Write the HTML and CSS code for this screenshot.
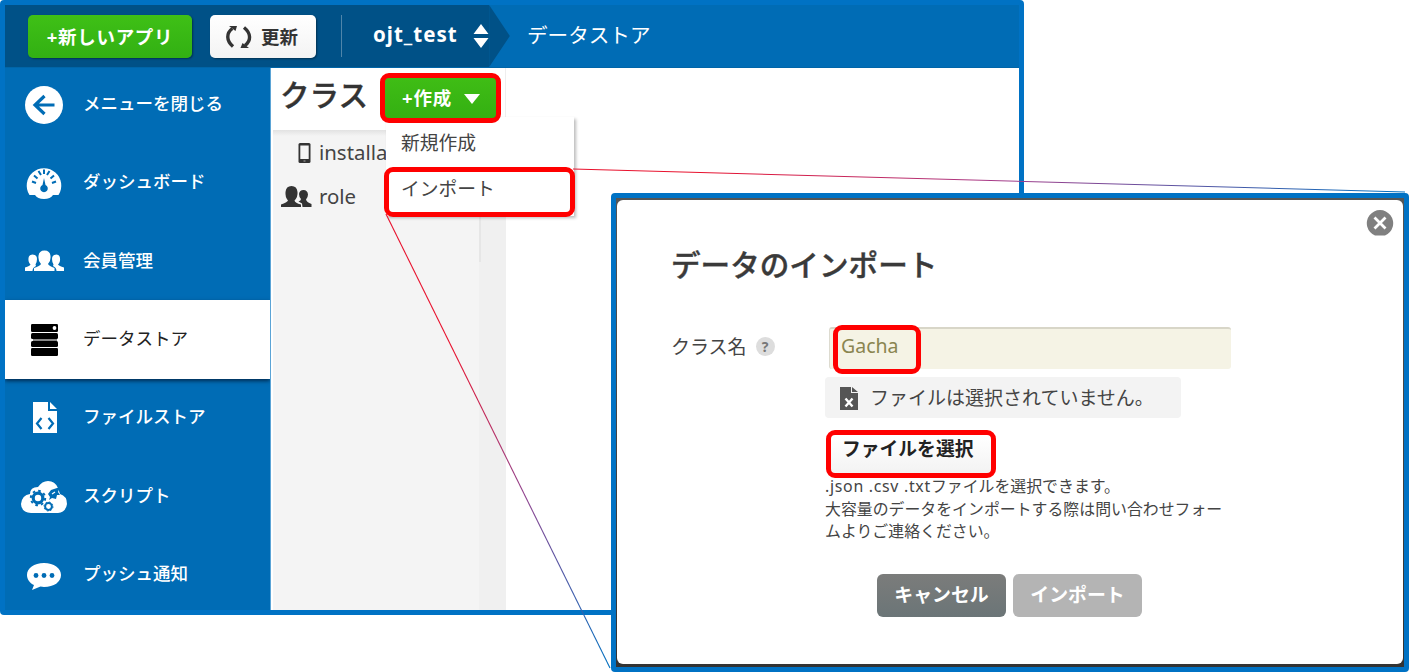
FILE: index.html
```html
<!DOCTYPE html>
<html lang="ja">
<head>
<meta charset="utf-8">
<title>データストア</title>
<link rel="stylesheet" href="styles.css">
</head>
<body>
<div class="stage">
  <div class="window">
    <header class="topbar">
      <div class="topbar-left">
        <button class="btn new-app"><span>+新しいアプリ</span></button>
        <button class="btn refresh">
          <svg width="28" height="24" viewBox="0 0 28 24"><g fill="none" stroke="#333" stroke-width="3.4"><path d="M8 21.500C1 15.500 1.300 8 7.300 3.500"/><path d="M19 2.500C26.500 8.500 26 16 20 20.500"/></g><path d="M4 1H12L10.500 6Z" fill="#333"/><path d="M24 23H15.500L17.500 18Z" fill="#333"/></svg>
          <span>更新</span>
        </button>
        <i class="divider"></i>
        <b class="app-name">ojt_test</b>
        <svg class="sorter" width="16" height="26" viewBox="0 0 16 26"><path d="M8 1 15.500 11H.5ZM8 25 .5 15H15.500Z" fill="#fff"/></svg>
      </div>
      <svg class="chevron" width="22" height="63" viewBox="0 0 22 63"><path d="M0 0 21 31.500 0 63Z" fill="#005187"/></svg>
      <span class="crumb">データストア</span>
    </header>
    <div class="content">
      <nav class="side">
        <div class="item first"><svg class="ico" width="50" height="44" viewBox="0 0 50 44"><circle cx="25" cy="22" r="19" fill="#fff"/><path d="M35.500 22H16M25.500 13 16 22l9.500 9" fill="none" stroke="#006cb5" stroke-width="3.200"/></svg><span>メニューを閉じる</span></div>
        <div class="item"><svg class="ico" width="50" height="44" viewBox="0 0 50 44"><path d="M10.500 34A17.300 17.300 0 1 1 39.500 34H34Q31.500 38 25 38T16 34Z" fill="#fff"/><path d="M13 20.500l4 1.500M15 14.500l3.500 3M19.500 10l2.500 4M25 8.500v4.500M30.500 10 28 14M35 14.500 31.500 17.500M37 20.500 33 22" stroke="#006cb5" stroke-width="2"/><path d="M25 17 26.500 24a3.800 3.800 0 1 1-3 0Z" fill="#006cb5"/></svg><span>ダッシュボード</span></div>
        <div class="item"><svg class="ico" width="50" height="44" viewBox="0 0 50 44" fill="#fff"><path d="M15 32V29Q21 27 22 25 19 22 19.500 17 20 11.500 25.500 11.500T31.500 17Q32 22 29 25 30 27 35.500 29V32Z"/><path d="M6 32V28.500Q11 27 11.500 25.500 9 23 9.500 19 10 15.500 13.500 15.500 18 15.500 18 20 18 23 16.500 25.500L17 27Q13.500 28.500 13.500 32ZM45 32V28.500Q40 27 39 25.500 41.500 23 41 19 40.500 15.500 37.500 15.500 33 15.500 33 20 33 23 34.500 25.500L34 27Q37.500 28.500 37.500 32Z"/></svg><span>会員管理</span></div>
        <div class="item active"><svg class="ico" width="50" height="44" viewBox="0 0 50 44"><g fill="#000"><rect x="12" y="6" width="27" height="8" rx="1.200"/><rect x="12" y="15" width="27" height="6" rx="1.500"/><rect x="12" y="23" width="27" height="6" rx="1.500"/><rect x="12" y="30" width="27" height="8" rx="1.200"/></g><path d="M14 22h24" stroke="#888" stroke-width="2"/><circle cx="35.500" cy="10" r="1.900" fill="#fff"/></svg><span>データストア</span></div>
        <div class="item"><svg class="ico" width="50" height="44" viewBox="0 0 50 44"><path d="M14 6h15v9h9v22H14ZM31 6l7 7H31Z" fill="#fff"/><path d="m22.500 22-4.500 5.500 4.500 5.500M29.500 22l4.500 5.500-4.500 5.500" fill="none" stroke="#006cb5" stroke-width="2.200"/></svg><span>ファイルストア</span></div>
        <div class="item"><svg class="ico" width="50" height="44" viewBox="0 0 50 44"><path d="M12 39Q2 38 2 30 3 21 11 20 11 13 19 13 23 7 29 7 36 7 39 14L41 20Q48 22 48 30 47 38 39 39Z" fill="#fff"/><g fill="none" stroke="#006cb5"><circle cx="19" cy="24" r="4.800" stroke-width="3.200"/><circle cx="19" cy="24" r="7.200" stroke-width="2" stroke-dasharray="2.600 3.050"/><circle cx="29.500" cy="32.500" r="3.400" stroke-width="2"/><circle cx="29.500" cy="32.500" r="4.500" stroke-width="1" stroke-dasharray="1.700 1.800"/></g><path d="M29 20 32 16 35 15 41 13 39 18 41 21 38 21 37 25 33 24 30 26 31 23Z" fill="#006cb5"/><path d="m33 20 3-2" stroke="#fff" stroke-width="1.200"/></svg><span>スクリプト</span></div>
        <div class="item"><svg class="ico" width="50" height="44" viewBox="0 0 50 44"><path d="M25 11C35 11 42 16 42 23S35 35 25 35L21.500 34.500 13 38 15 33C10.500 31 8 27 8 23 8 16 15 11 25 11Z" fill="#fff"/><g fill="#006cb5"><circle cx="17" cy="23.500" r="2.400"/><circle cx="25" cy="23.500" r="2.400"/><circle cx="33" cy="23.500" r="2.400"/></g></svg><span>プッシュ通知</span></div>
      </nav>
      <section class="classes">
        <div class="classes-head"><h2>クラス</h2></div>
        <div class="classes-body">
          <div class="list">
            <div class="row"><svg width="32" height="24" viewBox="0 0 32 24"><rect x="17.500" y="3" width="12" height="20" rx="1.500" fill="#333"/><path d="M19.300 5.500h8.400V19H19.300Z" fill="#f4f4f4"/><path d="M22.500 21h2" stroke="#aaa"/></svg><span>installa</span></div>
            <div class="row"><svg width="32" height="24" viewBox="0 0 32 24" fill="#333"><path d="M0 23V20.500Q6 18.500 7 16.500 4 13 4.500 8 5 2 10.500 2T16.500 8Q17 13 13.500 16.500 14 19 20 20.500V23ZM21.500 23 21 19.500 17.500 17.500Q20 16.500 20 15 18 13 18 10 18.500 6 22.500 6T27 10.500Q27 13 25 15.500 25.500 18 30.500 20V23Z"/></svg><span>role</span></div>
          </div>
          <div class="gutter"><i></i></div>
        </div>
      </section>
      <main class="blank"></main>
    </div>
  </div>

  <div class="menu">
    <div class="menu-item">新規作成</div>
    <div class="menu-item second">インポート</div>
  </div>
  <div class="create"><span>+作成</span><svg width="16" height="10" viewBox="0 0 16 10"><path d="M0 0h16L8 10Z" fill="#fff"/></svg></div>
  <i class="mark mark-import"></i>

  <svg class="leaders" width="1409" height="672" viewBox="0 0 1409 672">
    <defs>
      <linearGradient id="across" gradientUnits="userSpaceOnUse" x1="575" y1="169" x2="1405" y2="192"><stop offset=".15" stop-color="#e8112d"/><stop offset=".5" stop-color="#a83a87"/><stop offset="1" stop-color="#0070c0"/></linearGradient>
      <linearGradient id="down" gradientUnits="userSpaceOnUse" x1="386" y1="214" x2="610" y2="668"><stop offset=".3" stop-color="#e8112d"/><stop offset=".62" stop-color="#90438e"/><stop offset="1" stop-color="#0070c0"/></linearGradient>
    </defs>
    <path d="M573 169 1405 192" stroke="url(#across)"/>
    <path d="M386 214 610 668" stroke="url(#down)"/>
  </svg>

  <div class="dialog">
    <div class="panel">
      <svg class="close" width="28" height="28" viewBox="0 0 28 28"><path d="M9 26.500A13.200 13.200 0 1 1 19 26.500Z" fill="#808080"/><path d="m8.500 8.500 11 11M19.500 8.500l-11 11" stroke="#fff" stroke-width="2.800"/></svg>
      <h1>データのインポート</h1>
      <div class="form">
        <div class="label"><span>クラス名</span><i class="help">?</i></div>
        <div class="fields">
          <div class="input">Gacha</div>
          <div class="file"><svg width="20" height="24" viewBox="0 0 20 24"><path d="M0 0h11v6h7v17H0ZM12 0l6 5H12Z" fill="#555"/><path d="m5.500 11.500 7 8M12.500 11.500l-7 8" stroke="#fff" stroke-width="2.400"/></svg><span>ファイルは選択されていません。</span></div>
          <div class="choose"><span>ファイルを選択</span></div>
          <p><span class="note"><span class="ext">.json .csv .txt</span>ファイルを選択できます。</span><span>大容量のデータをインポートする際は問い合わせフォー</span><span>ムよりご連絡ください。</span></p>
        </div>
      </div>
      <div class="actions"><button class="cancel"><span>キャンセル</span></button><button class="submit"><span>インポート</span></button></div>
      <i class="mark mark-name"></i>
    </div>
  </div>
</div>
</body>
</html>
```
FILE: styles.css
```css
* { box-sizing: border-box; }
body { margin: 0; background: #fff; font-family: "Noto Sans", "Noto Sans CJK JP", sans-serif; color: #333; overflow: hidden; }
h1, h2, p { margin: 0; }
button { border: 0; padding: 0; font: inherit; }
svg { flex: none; display: block; }
span, h1, h2 { white-space: nowrap; }
.stage { position: relative; width: 1409px; height: 672px; overflow: hidden; }

.window { width: 1024px; height: 615px; border: 5px solid #0072c4; border-radius: 4px; display: flex; flex-direction: column; }
.topbar { height: 63px; flex: none; display: flex; background: #006cb5; border-bottom: 1px solid #0065a8; color: #fff; }
.topbar-left { width: 484px; flex: none; display: flex; align-items: center; padding-left: 23px; background: #005187; }
.btn { display: flex; align-items: center; height: 43px; border-radius: 5px; font-size: 18.500px; font-weight: 700; margin-top: 1px; box-shadow: 1px 1px 2px #0006; }
.new-app { width: 164px; padding-bottom: 2px; justify-content: center; background: linear-gradient(#3fc016, #32b013); color: #fff; letter-spacing: .7px; }
.refresh { width: 106px; margin-left: 18px; padding-left: 15px; gap: 8px; background: linear-gradient(#fff, #f3f3f3); color: #333; }
.refresh span { margin-bottom: 2px; }
.divider { width: 1px; height: 42px; margin-left: 25px; background: #4f85aa; }
.app-name { width: 85px; margin: 0 15px 5px 31px; font-size: 20.500px; line-height: 28px; letter-spacing: 1px; }
.sorter { margin-bottom: 1px; }
.chevron { height: 62px; }
.crumb { margin-left: 16px; font-size: 20.600px; line-height: 60px; }
.content { flex: 1; display: flex; min-height: 0; }
.side { width: 266px; flex: none; background: #006cb5; color: #fff; overflow: hidden; border-right: 1px solid #5ba4d6; }
.item { display: flex; align-items: center; gap: 14px; height: 78.300px; padding-left: 14px; font-size: 17.500px; font-weight: 500; }
.item span { margin-bottom: 4px; }
.item.first { height: 75.800px; padding-bottom: 2px; }
.item.active { background: #fff; color: #222; font-weight: 400; box-shadow: 0 2px 4px #002b50; }
.classes { width: 235px; flex: none; display: flex; flex-direction: column; padding-left: 2px; }
.classes-head { height: 62px; padding-left: 7px; background: #fff; border-right: 1px solid #eee; }
.classes-head h2 { font-size: 29.500px; line-height: 54px; font-weight: 500; -webkit-text-stroke: .4px currentColor; }
.classes-body { flex: 1; display: flex; background: linear-gradient(#e2e2e2, #f4f4f4 6px); }
.list { width: 206px; padding-left: 8px; }
.row { display: flex; align-items: center; gap: 6px; height: 44px; font-size: 20.400px; color: #444; }
.gutter { flex: 1; background: #f0f0f0; }
.gutter i { display: block; width: 2px; height: 132px; background: #e6e6e6; }

.menu { position: absolute; left: 386px; top: 117px; width: 188px; height: 99px; background: #fff; box-shadow: 2px 2px 3px #0004; font-size: 18.800px; color: #444; }
.menu-item { height: 46px; line-height: 53px; padding-left: 15px; }
.menu-item.second { line-height: 52px; }
.create { position: absolute; left: 380px; top: 73px; width: 121px; height: 50px; border: 5px solid red; border-radius: 9px; background: linear-gradient(#3fbd15, #34b012); color: #fff; display: flex; align-items: center; padding: 0 0 2px 17px; gap: 9px; font-size: 18.500px; font-weight: 700; }
.create span { width: 53px; letter-spacing: .8px; }
.create svg { margin-top: 4px; }
.mark { position: absolute; border: 5px solid red; border-radius: 9px; }
.mark-import { left: 384px; top: 167px; width: 191px; height: 50px; }
.leaders { position: absolute; left: 0; top: 0; fill: none; stroke-width: 1.100; }

.dialog { position: absolute; left: 611px; top: 193px; width: 798px; height: 479px; padding: 2px 1px 3px 1px; border: 5px solid #0072c4; border-radius: 4px; background: linear-gradient(#555, #333); }
.panel { position: relative; width: 786px; height: 464px; padding: 43px 0 0 54px; border-radius: 6px; background: #fff; }
.close { position: absolute; left: 749px; top: 9px; }
.panel h1 { font-size: 29.600px; line-height: 44px; font-weight: 500; -webkit-text-stroke: .4px currentColor; color: #3a3a3a; }
.form { display: flex; margin-top: 40px; }
.label { display: flex; align-items: center; width: 154px; height: 37px; flex: none; gap: 9px; font-size: 19px; color: #444; }
.help { width: 19px; height: 19px; margin-top: 2px; border-radius: 50%; background: #ddd; color: #777; font: 700 14px/19px "Noto Sans", sans-serif; text-align: center; }
.fields { width: 406px; }
.input { width: 402px; height: 42px; margin-left: 4px; padding-left: 11px; background: #f5f3e5; border-top: 2px solid #d8d6c8; border-left: 1px solid #dddbd0; border-radius: 3px; color: #8a8550; font-size: 19.500px; line-height: 34px; }
.file { display: flex; align-items: center; width: 356px; height: 41px; margin-top: 8px; padding-left: 15px; gap: 10px; border-radius: 4px; background: #f3f3f3; font-size: 19px; color: #444; }
.file svg { margin-top: 3px; }
.file span { margin-bottom: 2px; }
.choose { width: 170px; height: 48px; margin: 12px 0 0 1px; padding-left: 11px; border: 5px solid red; border-radius: 9px; background: linear-gradient(#fff, #f3f3f3); color: #222; font-size: 18.800px; line-height: 28px; font-weight: 700; }
.fields p { display: flex; flex-direction: column; margin-top: -4px; font-size: 15.900px; line-height: 22px; color: #444; }
.note { line-height: 24px; }
.ext { letter-spacing: .7px; }
.actions { display: flex; gap: 7px; margin: 32px 0 0 206px; }
.actions button { width: 129px; height: 43px; padding-bottom: 4px; border-radius: 6px; color: #fff; font-size: 18.900px; font-weight: 700; }
.cancel { background: linear-gradient(#7b7c7b, #6b7577); }
.submit { background: #b4b4b4; }
.mark-name { left: 216px; top: 125px; width: 88px; height: 49px; }
```
